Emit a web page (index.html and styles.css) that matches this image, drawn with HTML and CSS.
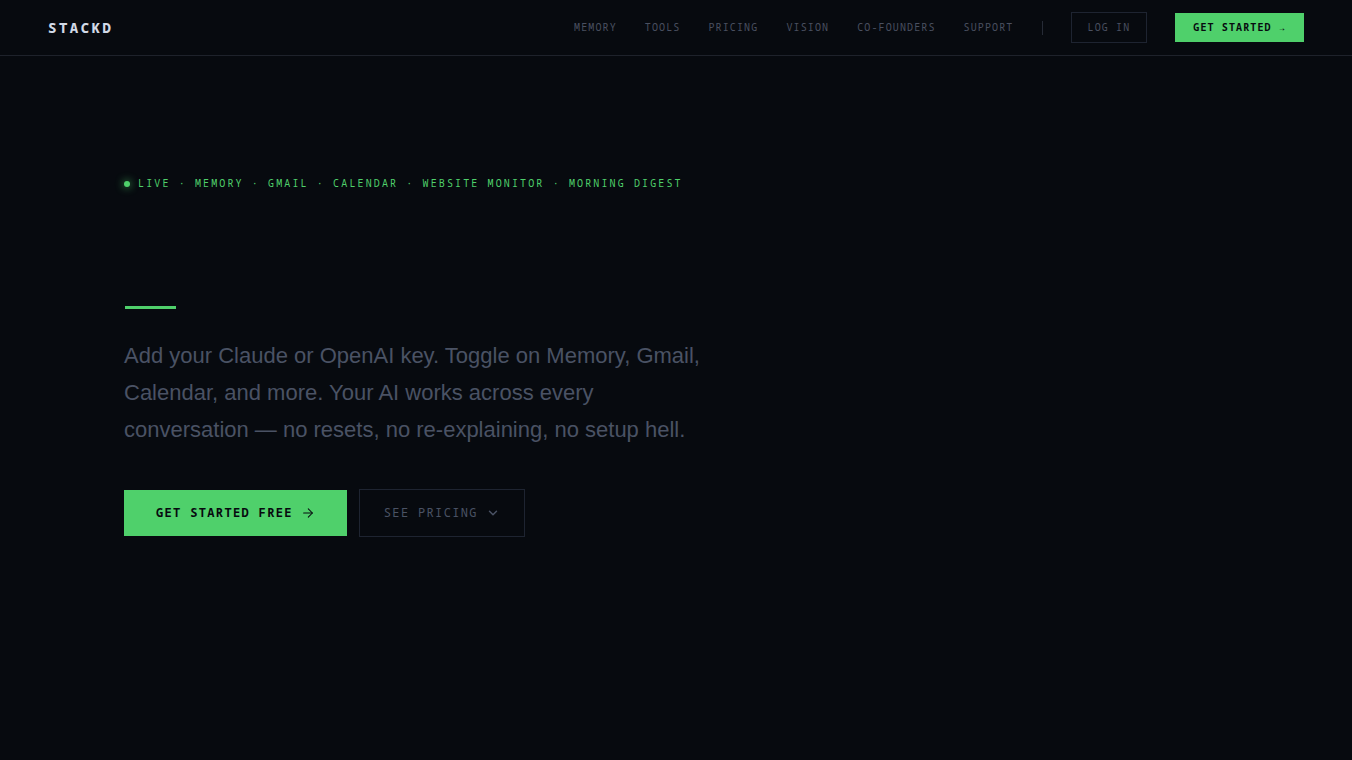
FILE: index.html
```html
<!DOCTYPE html>
<html lang="en">
<head>
    <meta charset="UTF-8">
    <meta name="viewport" content="width=device-width, initial-scale=1.0">
    <title>STACKD</title>
    <link rel="stylesheet" href="styles.css">
</head>
<body>
    <nav class="nav">
        <a href="#" class="logo">STACKD</a>
        <div class="nav-links">
            <a href="#memory">MEMORY</a>
            <a href="#tools">TOOLS</a>
            <a href="#pricing">PRICING</a>
            <a href="#vision">VISION</a>
            <a href="#cofounders">CO-FOUNDERS</a>
            <a href="#support">SUPPORT</a>
            <span class="nav-divider"></span>
            <a href="#login" class="nav-login">LOG IN</a>
            <a href="#start" class="nav-cta">GET STARTED →</a>
        </div>
    </nav>

    <main class="hero">
        <div class="eyebrow">
            <span class="dot"></span>
            <span>LIVE · MEMORY · GMAIL · CALENDAR · WEBSITE MONITOR · MORNING DIGEST</span>
        </div>
        <h1 class="headline"><span class="cursor"></span></h1>
        <p class="sub">Add your Claude or OpenAI key. Toggle on Memory, Gmail, Calendar, and more. Your AI works across every conversation — no resets, no re-explaining, no setup hell.</p>
        <div class="actions">
            <a href="#start" class="btn btn-primary">
                GET STARTED FREE
                <svg width="14" height="14" viewBox="0 0 24 24" fill="none" stroke="currentColor" stroke-width="1.8" stroke-linecap="round" stroke-linejoin="round"><path d="M4.5 12h15"/><path d="m12.5 5 7 7-7 7"/></svg>
            </a>
            <a href="#pricing" class="btn btn-ghost">
                SEE PRICING
                <svg width="14" height="14" viewBox="0 0 24 24" fill="none" stroke="currentColor" stroke-width="2.5" stroke-linecap="round" stroke-linejoin="round"><path d="m6 9 6 6 6-6"/></svg>
            </a>
        </div>
    </main>
</body>
</html>
```
FILE: styles.css
```css
* {
    margin: 0;
    padding: 0;
    box-sizing: border-box;
}
body {
    background: #070a0f;
    color: #d1d9e6;
    font-family: "Liberation Sans", Arial, sans-serif;
    height: 760px;
    overflow: hidden;
}
a {
    color: inherit;
    text-decoration: none;
}
.nav {
    display: flex;
    justify-content: space-between;
    align-items: center;
    height: 56px;
    padding: 0 48px;
    border-bottom: 1px solid #1e222b;
    font-family: "Noto Sans Mono", monospace;
}
.logo {
    font-size: 14px;
    font-weight: 800;
    letter-spacing: 0.18em;
}
.nav-links {
    display: flex;
    align-items: center;
    gap: 28px;
    font-size: 10px;
    line-height: 15px;
    letter-spacing: 1.13px;
    color: #4a5060;
}
.nav-divider {
    width: 1px;
    height: 14px;
    background: #262b36;
}
.nav-login {
    padding: 7px 16px;
    border: 1px solid #1e2431;
}
.nav-cta {
    padding: 7px 18px;
    background: #4fd06b;
    color: #070a0f;
    font-weight: 700;
}
.hero {
    padding: 119px 124px 0;
}
.eyebrow {
    display: flex;
    align-items: center;
    gap: 8px;
    height: 17px;
    font-family: "Noto Sans Mono", monospace;
    font-size: 10px;
    line-height: 15px;
    letter-spacing: 2.13px;
    color: #4fd06b;
}
.dot {
    width: 6px;
    height: 6px;
    border-radius: 50%;
    background: #4fd06b;
    box-shadow: 0 0 8px #4fd06b;
}
.headline {
    display: flex;
    align-items: flex-end;
    height: 117px;
    margin-bottom: 28px;
}
.cursor {
    width: 51px;
    height: 3px;
    margin-left: 1px;
    background: #4fd06b;
}
.sub {
    max-width: 580px;
    font-size: 22px;
    line-height: 37px;
    color: #4a5264;
}
.actions {
    display: flex;
    align-items: center;
    gap: 12px;
    margin-top: 41px;
}
.btn {
    display: flex;
    align-items: center;
    gap: 8px;
    font-family: "Noto Sans Mono", monospace;
    font-size: 12px;
    line-height: 18px;
    letter-spacing: 1.35px;
}
.btn-primary {
    height: 46px;
    padding: 0 32px 1px;
    background: #4fd06b;
    color: #070a0f;
    font-weight: 700;
}
.btn-ghost {
    height: 48px;
    padding: 0 24px 1px;
    border: 1px solid #1e2431;
    color: #4a5264;
}
.btn svg {
    position: relative;
    top: 0.5px;
}
```
